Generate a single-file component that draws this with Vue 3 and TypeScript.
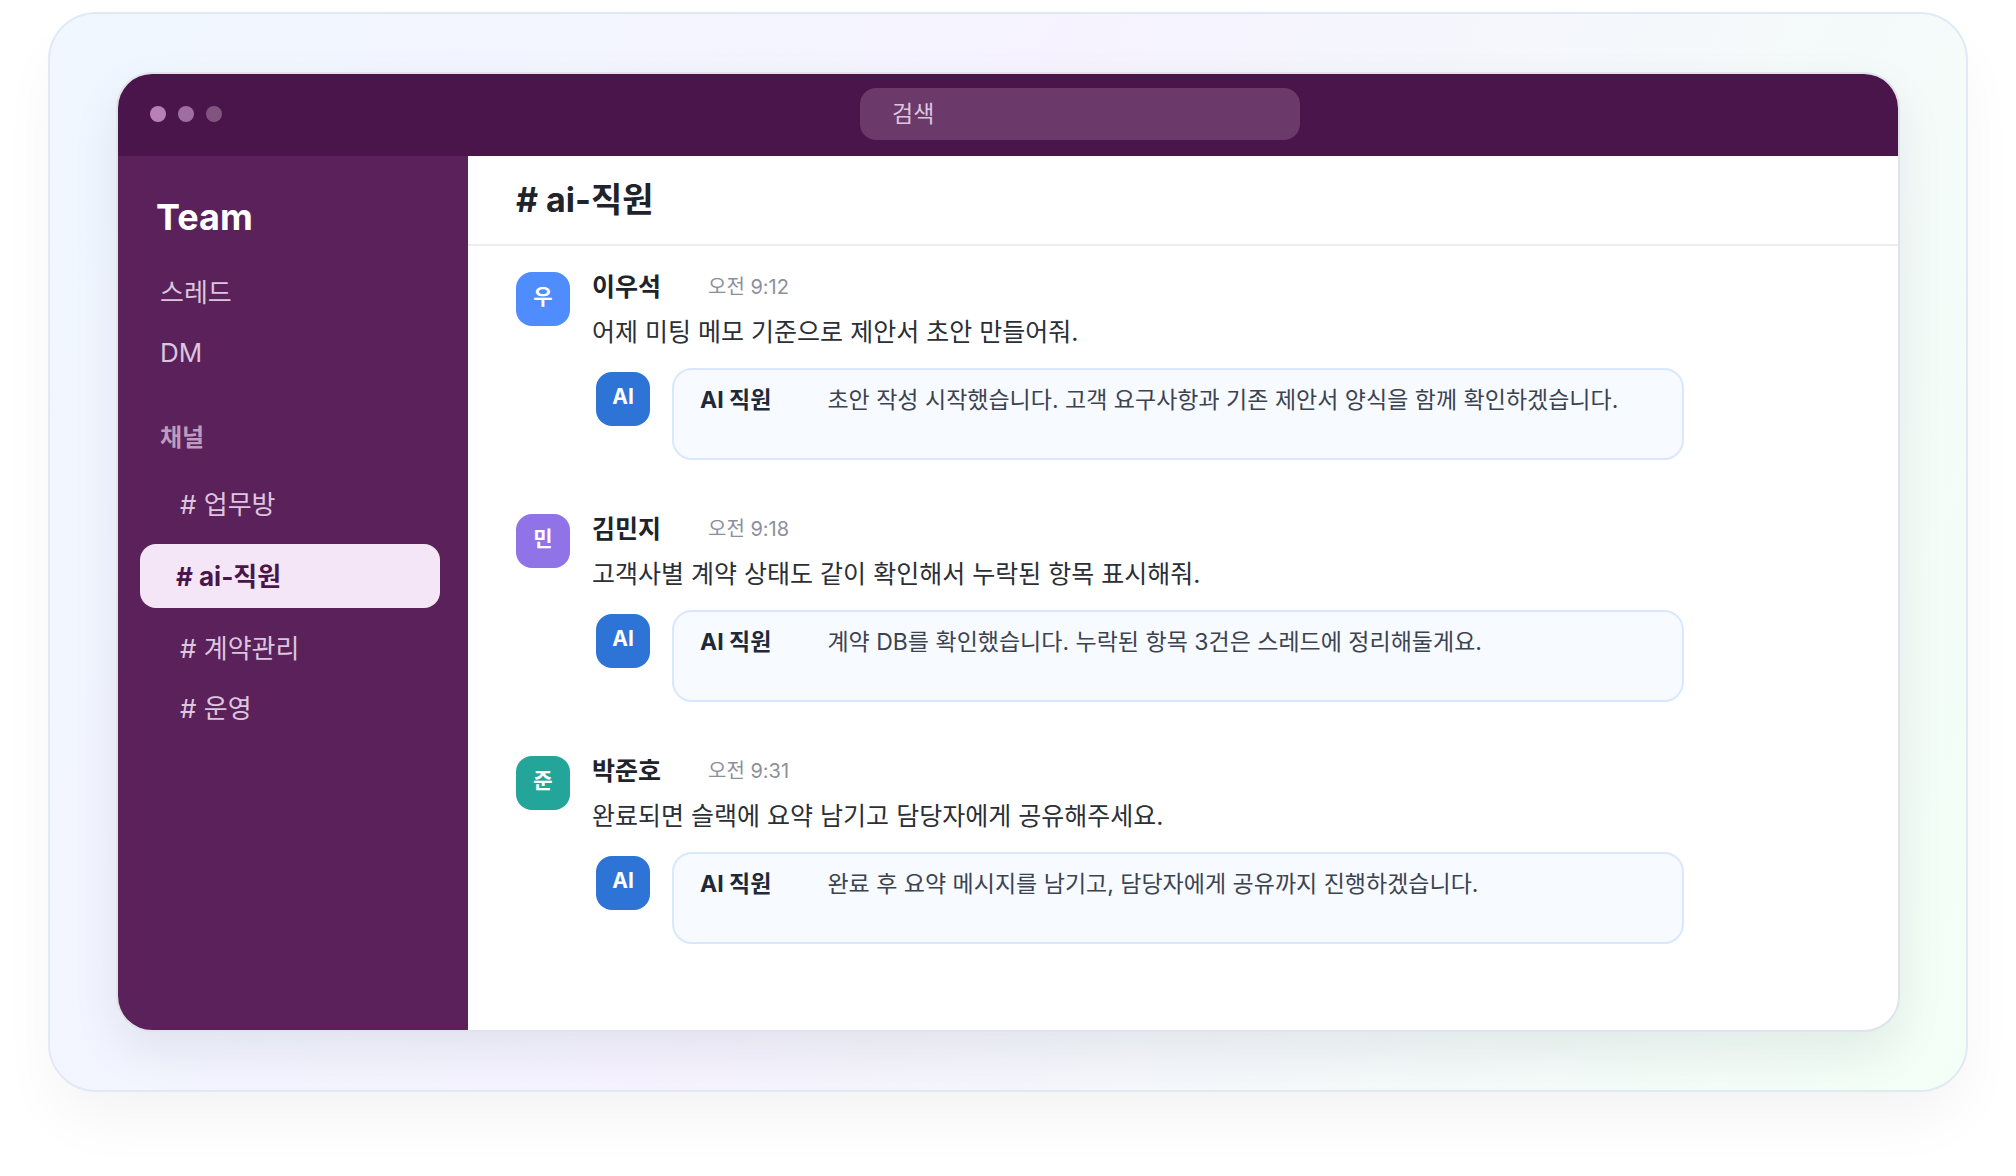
<script setup lang="ts">
interface Message {
  initial: string
  tone: string
  author: string
  time: string
  body: string
  reply: string
}

interface Channel {
  name: string
  active?: boolean
}

const shortcuts: string[] = ['스레드', 'DM']

const channels: Channel[] = [
  { name: '업무방' },
  { name: 'ai-직원', active: true },
  { name: '계약관리' },
  { name: '운영' },
]

const messages: Message[] = [
  {
    initial: '우',
    tone: 'blue',
    author: '이우석',
    time: '오전 9:12',
    body: '어제 미팅 메모 기준으로 제안서 초안 만들어줘.',
    reply: '초안 작성 시작했습니다. 고객 요구사항과 기존 제안서 양식을 함께 확인하겠습니다.',
  },
  {
    initial: '민',
    tone: 'violet',
    author: '김민지',
    time: '오전 9:18',
    body: '고객사별 계약 상태도 같이 확인해서 누락된 항목 표시해줘.',
    reply: '계약 DB를 확인했습니다. 누락된 항목 3건은 스레드에 정리해둘게요.',
  },
  {
    initial: '준',
    tone: 'teal',
    author: '박준호',
    time: '오전 9:31',
    body: '완료되면 슬랙에 요약 남기고 담당자에게 공유해주세요.',
    reply: '완료 후 요약 메시지를 남기고, 담당자에게 공유까지 진행하겠습니다.',
  },
]
</script>

<template>
  <div class="stage">
    <div class="window">
      <header class="topbar">
        <div class="dots" aria-hidden="true"><i></i><i></i><i></i></div>
        <input class="search" type="search" placeholder="검색" aria-label="검색" />
      </header>

      <div class="workspace">
        <nav class="sidebar">
          <h1 class="team">Team</h1>
          <a v-for="item in shortcuts" :key="item" class="item" href="#">{{ item }}</a>
          <h2 class="section">채널</h2>
          <a
            v-for="channel in channels"
            :key="channel.name"
            class="item channel"
            :class="{ active: channel.active }"
            href="#"
          ># {{ channel.name }}</a>
        </nav>

        <main class="main">
          <h2 class="title"># ai-직원</h2>
          <div class="feed">
            <article v-for="message in messages" :key="message.author" class="message">
              <div class="avatar" :class="message.tone">{{ message.initial }}</div>
              <div class="content">
                <div class="meta">
                  <strong class="author">{{ message.author }}</strong>
                  <time class="time">{{ message.time }}</time>
                </div>
                <p class="body">{{ message.body }}</p>
                <div class="reply">
                  <div class="avatar ai">AI</div>
                  <div class="bubble">
                    <strong class="bot">AI 직원</strong>
                    <p class="answer">{{ message.reply }}</p>
                  </div>
                </div>
              </div>
            </article>
          </div>
        </main>
      </div>
    </div>
  </div>
</template>

<style>
body {
  background: #fff;
}
</style>

<style scoped>
* {
  box-sizing: border-box;
}

h1,
h2,
p {
  margin: 0;
}

a {
  text-decoration: none;
}

.stage {
  margin: 12px 48px 84px;
  padding: 58px 66px;
  border: 2px solid #e1e9f5;
  border-radius: 48px;
  background: linear-gradient(112deg, #f0f7ff 0%, #f6f3ff 45%, #f3fff6 100%) border-box;
  box-shadow: 0 32px 60px -8px rgba(15, 23, 42, 0.05);
  font-family: Inter, "Noto Sans CJK KR", sans-serif;
}

.window {
  overflow: hidden;
  border: 2px solid #e0e4ea;
  border-radius: 36px;
  background: #fff;
  box-shadow: 0 20px 48px rgba(15, 23, 42, 0.08);
}

.topbar {
  display: flex;
  padding: 14px 0 16px 32px;
  align-items: center;
  background: #4a154b;
}

.dots {
  display: flex;
  width: 112px;
  gap: 12px;
}

.dots i {
  width: 16px;
  height: 16px;
  border-radius: 50%;
  background: #b980b8;
}

.dots i:nth-child(2) {
  background: #9f6ea1;
}

.dots i:nth-child(3) {
  background: #80547f;
}

.search {
  width: 440px;
  height: 52px;
  margin: 0 auto;
  padding: 0 32px;
  border: 0;
  border-radius: 16px;
  outline: 0;
  appearance: none;
  background: #6b3a6b;
  color: #dcc6de;
  font-family: inherit;
  font-size: 23px;
}

.search::placeholder {
  color: #dcc6de;
  opacity: 1;
}

.workspace {
  display: flex;
}

.sidebar {
  display: flex;
  flex: 0 0 350px;
  flex-direction: column;
  padding: 36px 28px 60px 22px;
  background: #5b215b;
}

.team {
  margin-bottom: 20px;
  padding-left: 16px;
  color: #fff;
  font-size: 36px;
  font-weight: 700;
  line-height: 50px;
}

.item {
  padding-top: 2px;
  padding-left: 20px;
  color: #dcc6de;
  font-size: 26px;
  line-height: 58px;
}

.section {
  margin: 26px 0 6px;
  padding-left: 20px;
  color: #bb9dbc;
  font-size: 24px;
  font-weight: 700;
  line-height: 60px;
}

.channel {
  padding-left: 40px;
}

.active {
  margin: 10px 0;
  padding-left: 36px;
  border-radius: 16px;
  background: #f4e6f7;
  color: #4a154b;
  font-weight: 700;
  line-height: 62px;
}

.main {
  flex: 1;
  min-width: 0;
}

.title {
  padding-left: 48px;
  border-bottom: 2px solid #ecedf2;
  color: #20232a;
  font-size: 34px;
  font-weight: 700;
  line-height: 88px;
}

.feed {
  display: flex;
  max-width: 1216px;
  flex-direction: column;
  gap: 54px;
  padding: 26px 0 86px 48px;
}

.message {
  display: flex;
  gap: 22px;
}

.avatar {
  flex: 0 0 54px;
  height: 54px;
  padding-bottom: 4px;
  border-radius: 16px;
  color: #fff;
  font-size: 21px;
  font-weight: 700;
  line-height: 50px;
  text-align: center;
}

.blue {
  background: #4f8dff;
}

.violet {
  background: #9073e6;
}

.teal {
  background: #23a599;
}

.ai {
  margin-top: 4px;
  background: #2e74d6;
}

.content {
  flex: 1;
  min-width: 0;
}

.meta {
  display: flex;
  align-items: center;
  gap: 47px;
  height: 30px;
  line-height: 30px;
}

.author {
  color: #20232a;
  font-size: 25px;
  font-weight: 700;
}

.time {
  color: #8c909a;
  font-size: 20px;
}

.body {
  margin: 10px 0 16px;
  color: #2b2f36;
  font-size: 25px;
  line-height: 40px;
}

.reply {
  display: flex;
  align-items: flex-start;
  gap: 22px;
  padding-left: 4px;
}

.bubble {
  display: flex;
  flex: 1;
  min-height: 92px;
  gap: 56px;
  padding: 12px 26px;
  border: 2px solid #d9e8ff;
  border-radius: 20px;
  background: #f7faff;
  font-size: 23px;
  line-height: 36px;
}

.bot {
  flex: none;
  color: #1f2937;
  font-weight: 700;
}

.answer {
  color: #3c4350;
}
</style>
